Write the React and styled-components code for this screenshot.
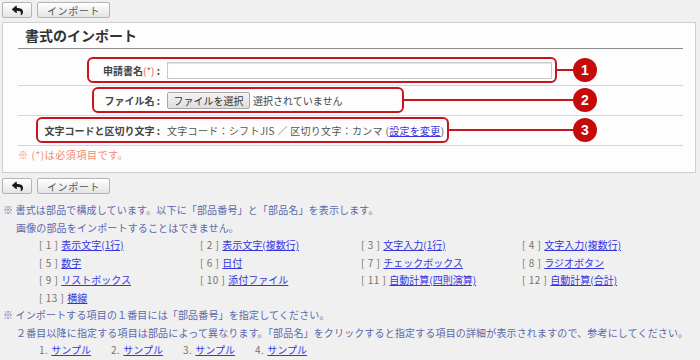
import * as React from 'react'
import styled, {createGlobalStyle} from 'styled-components'
import {FaReply} from 'react-icons/fa'

const GlobalStyle = createGlobalStyle`
  body {
    margin: 0;
    background: #f0f0f0;
    font-family: "Noto Sans CJK JP", "Liberation Sans", sans-serif;
    color: #333;
  }
`

const parts = [
    ['1', '表示文字(1行)'], ['2', '表示文字(複数行)'], ['3', '文字入力(1行)'], ['4', '文字入力(複数行)'],
    ['5', '数字'], ['6', '日付'], ['7', 'チェックボックス'], ['8', 'ラジオボタン'],
    ['9', 'リストボックス'], ['10', '添付ファイル'], ['11', '自動計算(四則演算)'], ['12', '自動計算(合計)'],
    ['13', '横線'],
]

function Toolbar() {
    return (
        <Bar>
            <ToolButton $w={30}><FaReply size={11} color="#1a1a1a"/></ToolButton>
            <ToolButton $w={73}>インポート</ToolButton>
        </Bar>
    )
}

function Marker({n}) {
    return (
        <>
            <Connector/>
            <Badge>{n}</Badge>
        </>
    )
}

export default function App() {
    return (
        <Page>
            <GlobalStyle/>
            <Toolbar/>
            <Panel>
                <Title>書式のインポート</Title>
                <Row $first>
                    <Callout $indent={69}>
                        <Label $w={67}>申請書名<Req>(*)</Req> :</Label>
                        <TextInput/>
                    </Callout>
                    <Marker n="1"/>
                </Row>
                <Row>
                    <Callout $indent={74}>
                        <Label $w={62}>ファイル名 :</Label>
                        <FileBox>
                            <FileButton>ファイルを選択</FileButton>
                            <span>選択されていません</span>
                        </FileBox>
                    </Callout>
                    <Marker n="2"/>
                </Row>
                <Row>
                    <Callout $indent={18}>
                        <Label $w={118}>文字コードと区切り文字 :</Label>
                        <Value>文字コード：シフトJIS ／ 区切り文字：カンマ (<Link>設定を変更</Link>)</Value>
                    </Callout>
                    <Marker n="3"/>
                </Row>
                <Required>※ (*)は必須項目です。</Required>
            </Panel>
            <Toolbar/>
            <Notes>
                <Note>※ 書式は部品で構成しています。以下に「部品番号」と「部品名」を表示します。</Note>
                <Note $indent>画像の部品をインポートすることはできません。</Note>
                <PartGrid>
                    {parts.map(([num, name]) => (
                        <Part key={num}>
                            <Num>[ {num} ]</Num><Link>{name}</Link>
                        </Part>
                    ))}
                </PartGrid>
                <Note>※ インポートする項目の１番目には「部品番号」を指定してください。</Note>
                <Note $indent>２番目以降に指定する項目は部品によって異なります。「部品名」をクリックすると指定する項目の詳細が表示されますので、参考にしてください。</Note>
                <Samples>
                    {[1, 2, 3, 4].map(i => (
                        <Sample key={i}><Num>{i}.</Num><Link>サンプル</Link></Sample>
                    ))}
                </Samples>
            </Notes>
        </Page>
    )
}

const Page = styled.div`
  width: 700px;
  box-sizing: border-box;
  padding: 2px 4px 0 2px;
  font-size: 10px;
`

const Bar = styled.div`
  display: flex;
  gap: 5px;
  height: 16px;
`

const ToolButton = styled.button`
  width: ${p => p.$w}px;
  height: 16px;
  padding: 0;
  display: flex;
  align-items: center;
  justify-content: center;
  border: 1px solid #b4b4b4;
  border-radius: 2px;
  background: linear-gradient(to bottom, #ffffff 0%, #e4e4e4 100%);
  font-family: inherit;
  font-size: 10px;
  letter-spacing: 0.6px;
  color: #555;
  cursor: pointer;
`

const Panel = styled.section`
  margin: 4px 0 5px;
  background: #fdfdfd;
  border: 1px solid #cfcfcf;
  padding: 0 12px 9px 15px;
`

const Title = styled.h2`
  margin: 0;
  height: 25px;
  line-height: 24px;
  padding-left: 7px;
  font-size: 14px;
  font-weight: bold;
  color: #333;
  border-bottom: 1px solid #8c8c8c;
`

const Row = styled.div`
  display: flex;
  align-items: center;
  padding: ${p => p.$first ? '8px 0 2px' : '1px 0 2px'};
  border-bottom: 1px solid #d6d6d6;
`

const Callout = styled.div`
  margin-left: ${p => p.$indent}px;
  display: flex;
  align-items: center;
  height: 22px;
  padding: 0 3px 0 4px;
  border: 2px solid #c8141e;
  border-radius: 6px;
`

const Label = styled.div`
  width: ${p => p.$w}px;
  flex: 0 0 auto;
  text-align: right;
  white-space: nowrap;
  font-weight: bold;
  color: #444;
  margin-right: 7px;
`

const Req = styled.span`
  color: #e8553c;
  font-weight: normal;
`

const TextInput = styled.input`
  width: 385px;
  height: 17px;
  box-sizing: border-box;
  border: 1px solid #c8c8c8;
  box-shadow: inset 0 1px 1px #e4e4e4;
  background: #fff;
  margin: 0;
  padding: 0 3px;
`

const FileBox = styled.div`
  width: 232px;
  display: flex;
  align-items: center;
  gap: 3px;
  color: #444;
  white-space: nowrap;
`

const FileButton = styled.button`
  height: 17px;
  width: 83px;
  padding: 0;
  border: 1px solid #a8a8a8;
  border-radius: 2px;
  background: linear-gradient(to bottom, #f4f4f4, #dedede);
  font-family: inherit;
  font-size: 10px;
  color: #333;
`

const Value = styled.div`
  color: #555;
  white-space: nowrap;
  letter-spacing: 0.3px;
`

const Link = styled.a`
  color: #3636e0;
  text-decoration: underline;
  cursor: pointer;
`

const Connector = styled.div`
  flex: 1;
  height: 2px;
  background: #c8141e;
`

const Badge = styled.div`
  width: 24px;
  height: 24px;
  margin-right: 86px;
  border-radius: 50%;
  background: #c40a0a;
  color: #fff;
  font-family: "Liberation Sans", sans-serif;
  font-weight: bold;
  font-size: 14px;
  display: flex;
  align-items: center;
  justify-content: center;
`

const Required = styled.div`
  padding-top: 1px;
  line-height: 16px;
  letter-spacing: 0.6px;
  color: #f5866c;
`

const Notes = styled.div`
  margin-top: 7px;
  line-height: 17.5px;
  color: #5b68ad;
`

const Note = styled.div`
  padding-left: ${p => p.$indent ? '14px' : '1px'};
  white-space: nowrap;
  letter-spacing: 0.15px;
`

const PartGrid = styled.div`
  display: grid;
  grid-template-columns: repeat(4, 161px);
  padding-left: 37px;
`

const Part = styled.div`
  white-space: nowrap;
`

const Num = styled.span`
  color: #7a7266;
  letter-spacing: 0.5px;
  margin-right: 3px;
`

const Samples = styled.div`
  display: flex;
  padding-left: 37px;
`

const Sample = styled.div`
  width: 72px;
  white-space: nowrap;
`
